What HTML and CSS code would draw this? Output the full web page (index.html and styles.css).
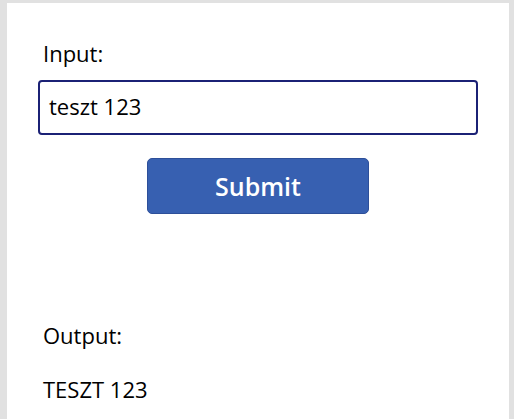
FILE: index.html
```html
<!DOCTYPE html>
<html>
<head>
<meta charset="utf-8">
<link rel="stylesheet" href="styles.css">
</head>
<body>
<div class="screen">
  <div class="label">Input:</div>
  <div class="input">teszt 123</div>
  <div class="btn-row"><button class="btn">Submit</button></div>
  <div class="label out-label">Output:</div>
  <div class="output">TESZT 123</div>
</div>
</body>
</html>
```
FILE: styles.css
```css
html, body { margin: 0; padding: 0; }
body {
  background: #e1e1e1;
  font-family: "Open Sans", "Liberation Sans", sans-serif;
  color: #000;
}
.screen {
  background: #fff;
  margin: 3px 5px 0 7px;
  height: 416px;
  box-sizing: border-box;
  padding: 35px 0 0 31px;
  display: flex;
  flex-direction: column;
}
.label {
  font-size: 22px;
  line-height: 30px;
  padding-left: 5px;
}
.input {
  margin-top: 12px;
  width: 440px;
  height: 55px;
  box-sizing: border-box;
  border: 2px solid #1b2175;
  border-radius: 4px;
  font-size: 22px;
  line-height: 49px;
  padding-left: 9px;
}
.btn-row {
  margin-top: 23px;
  width: 440px;
  display: flex;
  justify-content: center;
}
.btn {
  width: 222px;
  height: 56px;
  background: #3760b1;
  border: 1px solid #2d4f99;
  border-radius: 5px;
  color: #fff;
  font-family: "Open Sans", "Liberation Sans", sans-serif;
  font-size: 25px;
  font-weight: 600;
  padding: 0;
}
.out-label {
  margin-top: 106px;
}
.output {
  font-size: 22px;
  line-height: 30px;
  padding-left: 5px;
  margin-top: 24px;
}
```
